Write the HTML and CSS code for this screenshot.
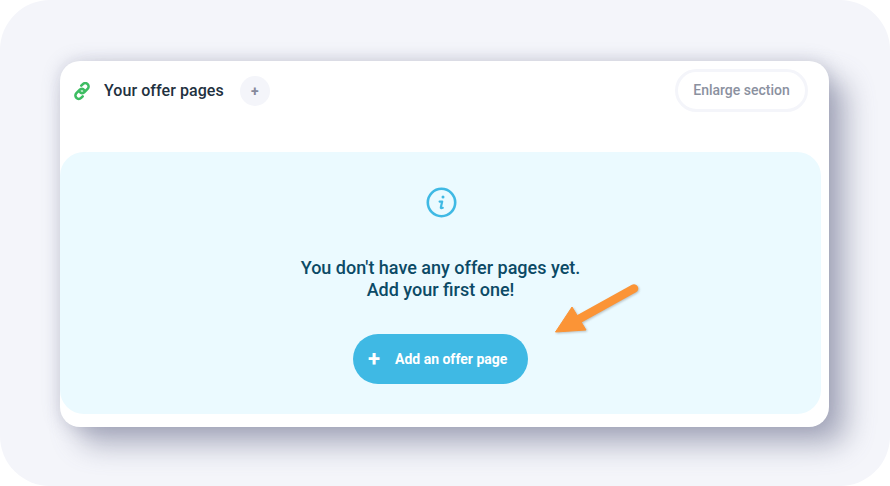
FILE: index.html
```html
<!DOCTYPE html>
<html lang="en">
<head>
  <meta charset="UTF-8">
  <title>Your offer pages</title>
  <link rel="stylesheet" href="styles.css">
</head>
<body>
  <div class="frame">
    <div class="card">
      <div class="card-header">
        <svg class="link-icon" width="20" height="20" viewBox="0 0 20 20" fill="none" stroke="#3dbd62" stroke-width="2.6" stroke-linecap="round">
          <path d="M7.6 9.8a3.2 3.2 0 0 0 4.4.6l3.6-3.6a3.3 3.3 0 0 0-4.7-4.7l-1.6 1.6"/>
          <path d="M12.4 8.2a3.2 3.2 0 0 0-4.4-.6l-3.6 3.6a3.3 3.3 0 0 0 4.7 4.7l1.6-1.6"/>
        </svg>
        <h2>Your offer pages</h2>
        <button class="add-small">+</button>
        <button class="enlarge">Enlarge section</button>
      </div>
      <div class="panel">
        <svg class="info-icon" width="32" height="32" viewBox="0 0 32 32" fill="none" stroke="#3fb9e4">
          <circle cx="16.5" cy="16.5" r="13.7" stroke-width="2.6"/>
          <path d="M14.6 15.6H17.2L15.8 21.4Q15.6 22.6 17.8 21.8" stroke-width="2.2" stroke-linecap="round" stroke-linejoin="round"/>
          <circle cx="18" cy="11" r="1.5" fill="#3fb9e4" stroke="none"/>
        </svg>
        <p class="message">You don't have any offer pages yet.<br>Add your first one!</p>
        <button class="add-main"><span class="plus">+</span>Add an offer page</button>
      </div>
      <svg class="arrow" width="92" height="62" viewBox="0 0 92 62" fill="none">
        <path d="M81 12.5L26 43" stroke="#fb9436" stroke-width="8.5" stroke-linecap="round"/>
        <path d="M2.5 56L19 31L33 54Z" fill="#fb9436" stroke="#fb9436" stroke-width="1" stroke-linejoin="round"/>
      </svg>
    </div>
  </div>
</body>
</html>
```

FILE: styles.css
```css
* {
  box-sizing: border-box;
  margin: 0;
  padding: 0;
  font-family: 'Roboto', sans-serif;
}

body {
  background-color: #fff;
  width: 890px;
  height: 486px;
  overflow: hidden;
}

.frame {
  width: 890px;
  height: 486px;
  padding: 61px 61px 59px 60px;
  background-color: #f4f5fa;
  border-radius: 50px;
}

.card {
  position: relative;
  height: 366px;
  background-color: #fff;
  border-radius: 20px;
  box-shadow: 18px 18px 28px rgba(100, 105, 135, 0.48), 0 0 18px rgba(100, 105, 135, 0.28);
}

.card-header {
  display: flex;
  align-items: flex-start;
  height: 91px;
  padding: 8px 21px 0 12px;
}

.link-icon {
  margin-top: 13px;
}

h2 {
  margin: 12px 16px 0 12px;
  font-size: 16px;
  font-weight: 500;
  line-height: 19px;
  letter-spacing: 0.06px;
  color: #1f3140;
}

.add-small {
  width: 30px;
  height: 30px;
  margin-top: 7px;
  border: none;
  border-radius: 50%;
  background-color: #f4f5fa;
  color: #868a9c;
  font-size: 14px;
  font-weight: 700;
}

.enlarge {
  width: 133px;
  height: 43px;
  margin-left: auto;
  padding-bottom: 2px;
  border: 3px solid #f4f5fa;
  border-radius: 22px;
  background-color: #fff;
  color: #8b919f;
  font-size: 14px;
  font-weight: 500;
}

.panel {
  display: flex;
  flex-direction: column;
  align-items: center;
  width: 761px;
  height: 262px;
  padding-top: 34px;
  background-color: #ebfaff;
  border-radius: 24px;
}

.message {
  margin-top: 39px;
  font-size: 18px;
  font-weight: 500;
  line-height: 22px;
  text-align: center;
  color: #0b4a66;
}

.add-main {
  display: flex;
  align-items: center;
  width: 175px;
  height: 50px;
  margin-top: 33px;
  padding-left: 15px;
  border: none;
  border-radius: 25px;
  background-color: #3fb9e4;
  color: #fff;
  font-size: 14px;
  font-weight: 700;
}

.plus {
  width: 27px;
  font-size: 22px;
  line-height: 22px;
  text-align: left;
}

.arrow {
  position: absolute;
  left: 493px;
  top: 215px;
  filter: drop-shadow(1px 1px 1px rgba(90, 90, 90, 0.35));
}
```
